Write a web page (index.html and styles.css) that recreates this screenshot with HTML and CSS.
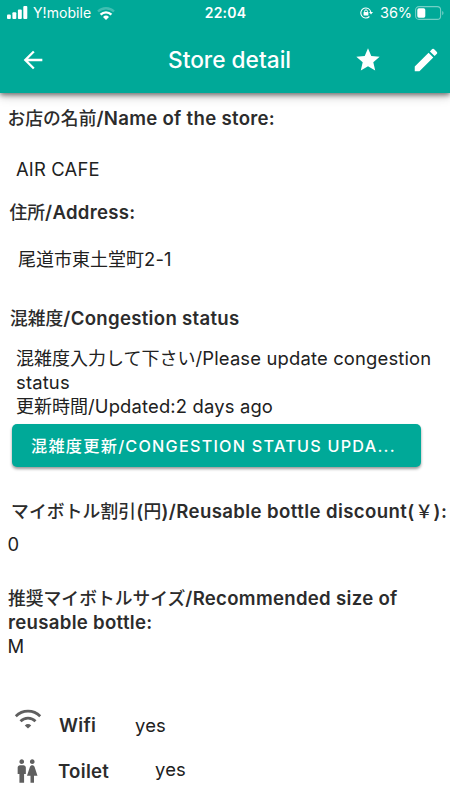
FILE: index.html
```html
<!DOCTYPE html>
<html lang="ja">
<head>
<meta charset="utf-8">
<meta name="viewport" content="width=device-width, initial-scale=1">
<title>Store detail</title>
<link rel="stylesheet" href="styles.css">
</head>
<body>
<header class="header">
  <div class="status">
    <div class="status-side">
      <svg class="signal" width="21" height="13" viewBox="0 0 21 13" fill="#fff"><rect x="0" y="8.5" width="3.8" height="4.5" rx="1"/><rect x="5.4" y="6.3" width="3.9" height="6.7" rx="1"/><rect x="10.9" y="3.5" width="3.9" height="9.5" rx="1"/><rect x="16.3" y="0" width="4" height="13" rx="1"/></svg>
      <span class="carrier">Y!mobile</span>
      <svg class="status-wifi" width="18" height="13" viewBox="0 0 18 13" fill="none" stroke="#fff" stroke-width="2.4"><path d="M1 4.500a11.500 11.500 0 0 1 16 0" opacity=".25"/><path d="M3.600 7.600a7.700 7.700 0 0 1 10.800 0"/><path d="M9 13 6 10a4.300 4.300 0 0 1 6 0z" fill="#fff" stroke="none"/></svg>
    </div>
    <span class="clock">22:04</span>
    <div class="status-side status-right">
      <svg width="13" height="12" viewBox="0 0 13 12"><path d="M10.800 5.200A5 5 0 1 0 9.400 9.500" fill="none" stroke="#fff" stroke-width="1.1"/><path d="M9 5.100h4l-2 2.500z" fill="#fff"/><path d="M4.600 5.200V4.300a1.400 1.400 0 0 1 2.800 0v.9" fill="none" stroke="#fff"/><rect x="3.600" y="5" width="4.800" height="3.600" rx=".5" fill="#fff"/></svg>
      <span class="percent">36%</span>
      <svg width="29" height="14" viewBox="0 0 29 14"><rect x=".6" y=".6" width="25" height="12.800" rx="3.400" fill="none" stroke="#fff" stroke-opacity=".45" stroke-width="1.1"/><rect x="2.300" y="2.300" width="8" height="9.400" rx="1.600" fill="#fff"/><path d="M27.200 5v4.200q1.300-.6 1.300-2.100T27.200 5z" fill="#fff" opacity=".45"/></svg>
    </div>
  </div>
  <div class="toolbar">
    <svg class="back" width="28" height="28" viewBox="0 0 24 24" fill="#fff"><path d="M20 11H7.830l5.590-5.590L12 4l-8 8 8 8 1.410-1.410L7.830 13H20v-2z"/></svg>
    <h1 class="title">Store detail</h1>
    <svg class="star" width="28" height="28" viewBox="0 0 24 24" fill="#fff"><path d="M12 17.270 18.180 21l-1.640-7.030L22 9.240l-7.190-.61L12 2 9.190 8.630 2 9.240l5.460 4.730L5.820 21z"/></svg>
    <svg class="edit" width="30" height="30" viewBox="0 0 24 24" fill="#fff"><path d="M3 17.250V21h3.750L17.810 9.940l-3.750-3.750L3 17.250zM20.710 7.040a1 1 0 0 0 0-1.410l-2.340-2.340a1 1 0 0 0-1.410 0l-1.830 1.830 3.750 3.750 1.830-1.830z"/></svg>
  </div>
</header>
<main class="content">
  <h2 class="label name-label">お店の名前<span class="en">/Name of the store:</span></h2>
  <p class="value name-value"><span class="latin">AIR CAFE</span></p>
  <h2 class="label address-label">住所<span class="en">/Address:</span></h2>
  <p class="value address-value">尾道市東土堂町<span class="latin">2-1</span></p>
  <h2 class="label congestion-label">混雑度<span class="en">/Congestion status</span></h2>
  <p class="value congestion-value">混雑度入力して下さい<span class="latin">/Please update congestion<br>status</span><br>更新時間<span class="latin">/Updated:2 days ago</span></p>
  <button class="update">混雑度更新/CONGESTION STATUS UPDA...</button>
  <h2 class="label discount-label">マイボトル割引<span class="en">(</span>円<span class="en">)/Reusable bottle discount(</span><span class="yen">￥</span><span class="en">):</span></h2>
  <p class="value discount-value"><span class="latin">0</span></p>
  <h2 class="label size-label">推奨マイボトルサイズ<span class="en">/Recommended size of<br>reusable bottle:</span></h2>
  <p class="value size-value"><span class="latin">M</span></p>
  <div class="feature wifi">
    <svg class="feature-icon" width="28" height="28" viewBox="0 0 28 28" fill="none" stroke="#5f5f5f" stroke-width="2.700"><path d="M1.800 9.200a17.200 17.200 0 0 1 24.400 0"/><path d="M6.500 14.200a10.600 10.600 0 0 1 15 0"/><path d="m14 21.600-3.200-3.100a4.800 4.800 0 0 1 6.400 0z" fill="#5f5f5f" stroke="none"/></svg>
    <h2 class="label"><span class="en">Wifi</span></h2>
    <p class="value"><span class="latin">yes</span></p>
  </div>
  <div class="feature toilet">
    <svg class="feature-icon" width="28" height="28" viewBox="0 0 24 24" fill="#5f5f5f"><path d="M5.500 22v-7.500H4V9c0-1.100.9-2 2-2h3c1.100 0 2 .9 2 2v5.500H9.500V22h-4zM18 22v-6h3l-2.540-7.630C18.180 7.550 17.420 7 16.560 7h-.12c-.86 0-1.630.55-1.900 1.370L12 16h3v6h3zM7.500 6c1.110 0 2-.89 2-2s-.89-2-2-2-2 .89-2 2 .89 2 2 2zm9 0c1.110 0 2-.89 2-2s-.89-2-2-2-2 .89-2 2 .89 2 2 2z"/></svg>
    <h2 class="label"><span class="en">Toilet</span></h2>
    <p class="value toilet-value"><span class="latin">yes</span></p>
  </div>
</main>
</body>
</html>
```
FILE: styles.css
```css
* { box-sizing: border-box; }
body {
  margin: 0;
  height: 800px;
  overflow: hidden;
  background: #fff;
  color: #212121;
  font-family: Inter, "Noto Sans CJK JP", sans-serif;
  font-size: 18px;
  line-height: 24px;
}
h1, h2, p { margin: 0; }
svg { display: block; flex: none; }
.header {
  height: 93px;
  background: #00a998;
  color: #fff;
  box-shadow: 0 2px 5px rgba(0, 0, 0, .5), 0 4px 10px rgba(0, 0, 0, .16);
}
.status {
  display: grid;
  grid-template-columns: 1fr auto 1fr;
  align-items: center;
  height: 25px;
  padding: 0 6px 0 7px;
}
.status-side { display: flex; align-items: center; }
.status-right { justify-content: flex-end; }
.carrier { margin: 0 6px 0 5px; font-size: 14px; letter-spacing: .05px; }
.status-wifi { margin-top: 1px; }
.clock { font-size: 14px; font-weight: 600; letter-spacing: .2px; }
.percent { margin: 0 3px 0 7px; font-size: 14.500px; letter-spacing: -.1px; }
.toolbar { display: flex; align-items: center; height: 69px; padding: 0 9px 0 19px; }
.title { flex: 1; margin-left: 121px; font-size: 22.700px; font-weight: 500; line-height: 30px; white-space: nowrap; }
.star { margin-right: 29px; }
.content { display: flex; flex-direction: column; padding-top: 14px; }
.label { color: #2c2c2c; font-size: 17.800px; font-weight: 500; line-height: 24px; white-space: nowrap; }
.en { font-size: 18.600px; font-weight: 600; letter-spacing: .3px; line-height: 20px; }
.latin { font-size: 18.400px; letter-spacing: .17px; line-height: 20px; }
.value { font-size: 18px; white-space: nowrap; }
.name-label { margin-left: 7.500px; }
.name-value { margin: 27px 0 0 16px; }
.address-label { margin: 19px 0 0 9.500px; }
.address-value { margin: 23px 0 0 18px; }
.congestion-label { margin: 35px 0 0 10px; }
.congestion-value { margin: 16px 0 0 16px; }
.update {
  width: 409px;
  height: 43px;
  margin: 5px 0 0 12px;
  padding: 0 0 0 19px;
  border: 0;
  border-radius: 5px;
  background: #00a998;
  box-shadow: 0 2px 3px rgba(0, 0, 0, .4);
  color: #fff;
  font: 500 16.200px/24px Inter, "Noto Sans CJK JP", sans-serif;
  letter-spacing: 1.240px;
  text-align: left;
  white-space: nowrap;
}
.discount-label { margin: 33px 0 0 11px; letter-spacing: .1px; }
.discount-label .en { letter-spacing: .4px; }
.yen { margin: 0 .5px; }
.discount-value { margin: 9px 0 0 7.500px; }
.size-label { margin: 30px 0 0 8px; }
.size-value { margin-left: 7.500px; }
.feature { display: flex; align-items: center; height: 28px; padding-left: 14px; }
.feature .label { width: 76px; margin: 2px 0 0 17px; }
.feature .value { margin-top: 2px; }
.wifi { margin-top: 52px; }
.wifi .feature-icon { margin-top: -8px; }
.toilet { margin-top: 18px; }
.toilet .feature-icon { margin-left: -1px; }
.toilet .label { width: 97px; }
.feature .toilet-value { margin-top: -3px; }
```
